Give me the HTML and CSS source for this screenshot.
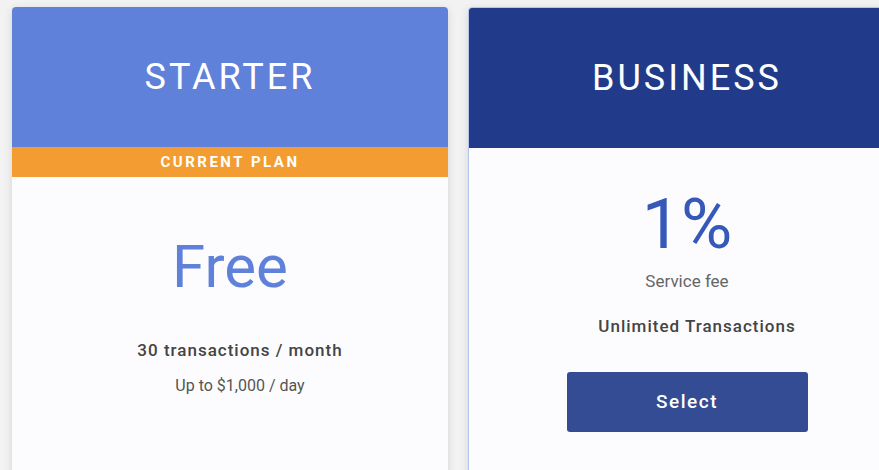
FILE: index.html
```html
<!DOCTYPE html>
<html lang="en">
<head>
    <meta charset="UTF-8">
    <meta name="viewport" content="width=device-width, initial-scale=1.0">
    <title>Plans</title>
    <link rel="stylesheet" href="styles.css">
</head>
<body>
    <div class="plans">
        <div class="card">
            <div class="head starter">
                <h2>STARTER</h2>
            </div>
            <div class="badge">CURRENT PLAN</div>
            <div class="body free-body">
                <h1 class="price free">Free</h1>
                <ul class="features">
                    <li class="main">30 transactions / month</li>
                    <li class="sub">Up to $1,000 / day</li>
                </ul>
            </div>
        </div>
        <div class="card business-card">
            <div class="head business">
                <h2>BUSINESS</h2>
            </div>
            <div class="body biz-body">
                <h1 class="price pct">1%</h1>
                <p class="fee">Service fee</p>
                <ul class="features">
                    <li class="main">Unlimited Transactions</li>
                </ul>
                <button class="select">Select</button>
            </div>
        </div>
    </div>
</body>
</html>
```

FILE: styles.css
```css
* {
    margin: 0;
    padding: 0;
    box-sizing: border-box;
}

body {
    background-color: #f2f2f2;
    font-family: Roboto, "Liberation Sans", sans-serif;
    overflow: hidden;
}

.plans {
    display: flex;
    gap: 20px;
    padding: 7px 0 0 12px;
}

.card {
    flex: 0 0 436px;
    height: 480px;
    background-color: #fcfcfe;
    border-radius: 4px;
    overflow: hidden;
    box-shadow: 0 2px 8px rgba(0, 0, 0, 0.12);
    display: flex;
    flex-direction: column;
}

.business-card {
    flex-basis: 438px;
    border: 1px solid #b3c5ea;
}

.head {
    height: 140px;
    flex-shrink: 0;
    display: flex;
    justify-content: center;
    align-items: center;
    color: white;
}

.head h2 {
    font-size: 36px;
    font-weight: 400;
    letter-spacing: 3px;
}

.starter {
    background-color: #5f81d9;
}

.business {
    background-color: #213b8a;
}

.badge {
    height: 30px;
    flex-shrink: 0;
    background-color: #f39c32;
    color: white;
    font-size: 15px;
    font-weight: 700;
    letter-spacing: 2.5px;
    display: flex;
    justify-content: center;
    align-items: center;
}

.body {
    display: flex;
    flex-direction: column;
    align-items: center;
    text-align: center;
}

.free-body {
    padding-top: 60px;
}

.biz-body {
    padding-top: 41px;
}

.price {
    font-weight: 400;
    line-height: 1;
}

.free {
    font-size: 60px;
    color: #5f81d9;
}

.pct {
    font-size: 70px;
    color: #3659b9;
}

.features {
    list-style: none;
    padding-left: 20px;
    line-height: 1.2;
}

.main {
    font-size: 17px;
    font-weight: 500;
    color: #444;
    letter-spacing: 1px;
}

.free-body .features {
    margin-top: 43px;
}

.sub {
    font-size: 16px;
    color: #555;
    margin-top: 16px;
}

.fee {
    font-size: 17px;
    line-height: 1.2;
    color: #666;
    margin-top: 12px;
}

.biz-body .features {
    margin-top: 25px;
}

.select {
    margin-top: 35px;
    width: 241px;
    height: 60px;
    border: none;
    border-radius: 3px;
    background-color: #344c94;
    color: white;
    font-family: Roboto, "Liberation Sans", sans-serif;
    font-size: 19px;
    font-weight: 500;
    letter-spacing: 1.5px;
}
```
